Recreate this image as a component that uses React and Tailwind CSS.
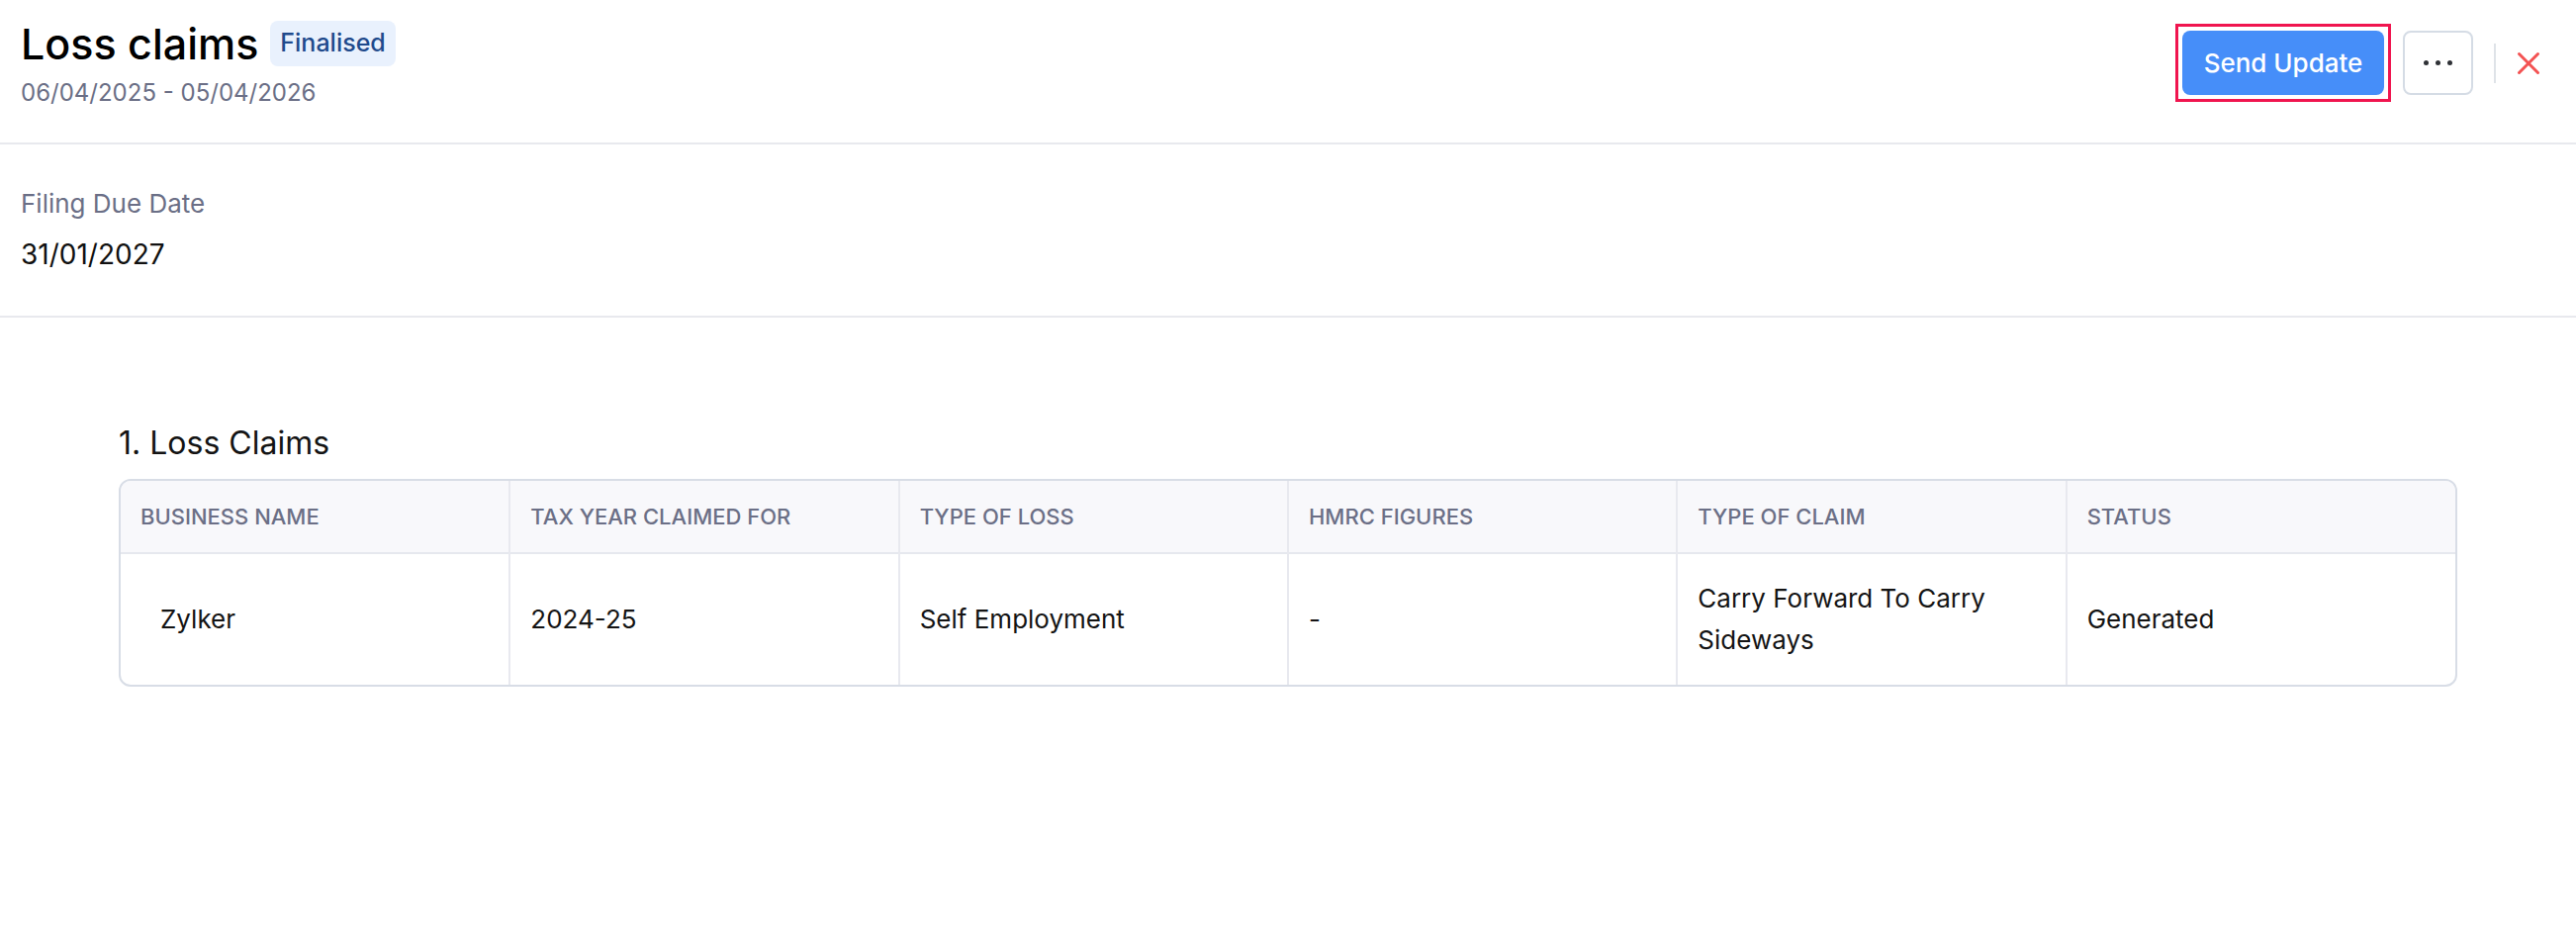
import React from "react";

const columns = [
  "Business Name",
  "Tax Year Claimed For",
  "Type Of Loss",
  "HMRC Figures",
  "Type Of Claim",
  "Status",
];

const claims = [
  {
    business: "Zylker",
    taxYear: "2024-25",
    lossType: "Self Employment",
    hmrc: "-",
    claimType: "Carry Forward To Carry Sideways",
    status: "Generated",
  },
];

function MoreDots() {
  return (
    <span className="flex items-center gap-[7px]">
      <span className="w-[5px] h-[5px] rounded-full bg-[#2f3136]" />
      <span className="w-[5px] h-[5px] rounded-full bg-[#2f3136]" />
      <span className="w-[5px] h-[5px] rounded-full bg-[#2f3136]" />
    </span>
  );
}

function CloseIcon() {
  return (
    <svg width="28" height="28" viewBox="0 0 28 28" fill="none">
      <path d="M4.5 4.5L23.5 23.5M23.5 4.5L4.5 23.5" stroke="#f35252" strokeWidth="3" strokeLinecap="round" />
    </svg>
  );
}

function Header() {
  return (
    <div className="flex items-start justify-between pl-[21px] pr-[34px] pt-[16px] pb-[34px] border-b-2 border-[#e8e9ee]">
      <div>
        <div className="flex items-center gap-[12px]">
          <h1 className="text-[43px] leading-[56px] font-medium text-black">Loss claims</h1>
          <span className="h-[46px] px-[10px] flex items-center rounded-[8px] bg-[#e9f1fd] text-[#1f4a8c] text-[25px] font-medium">
            Finalised
          </span>
        </div>
        <p className="mt-[6px] text-[24px] leading-[32px] text-[#6b6f86]">06/04/2025 - 05/04/2026</p>
      </div>

      <div className="mt-[8px] flex items-center">
        <div className="border-[3px] border-[#f0154f] p-[4px]">
          <button className="w-[204px] h-[65px] rounded-[8px] bg-[#468ef9] text-white text-[26px] font-medium">
            Send Update
          </button>
        </div>
        <button className="ml-[12px] w-[71px] h-[65px] rounded-[8px] border-2 border-[#d5dce5] bg-white flex items-center justify-center">
          <MoreDots />
        </button>
        <span className="ml-[21px] w-[2px] h-[40px] bg-[#dfe3e8]" />
        <button className="ml-[19px] flex items-center justify-center">
          <CloseIcon />
        </button>
      </div>
    </div>
  );
}

function LossClaimsTable() {
  return (
    <div className="border-2 border-[#d8dde6] rounded-[12px] overflow-hidden">
      <table className="w-full table-fixed border-collapse">
        <thead>
          <tr className="bg-[#f8f8fb] border-b-2 border-[#e6e8ee]">
            {columns.map((col, i) => (
              <th
                key={col}
                className={`h-[73px] pl-[20px] pr-[16px] text-left align-middle text-[22px] font-medium uppercase text-[#6b6f86] ${i > 0 ? "border-l-2 border-[#e8e9ef]" : ""}`}
              >
                {col}
              </th>
            ))}
          </tr>
        </thead>
        <tbody>
          {claims.map((row) => (
            <tr key={row.business} className="text-[26px] leading-[42px] text-[#141414]">
              <td className="pl-[40px] pr-[16px] py-[24px] align-middle">{row.business}</td>
              <td className="pl-[20px] pr-[16px] py-[24px] align-middle border-l-2 border-[#e8e9ef]">{row.taxYear}</td>
              <td className="pl-[20px] pr-[16px] py-[24px] align-middle border-l-2 border-[#e8e9ef]">{row.lossType}</td>
              <td className="pl-[20px] pr-[16px] py-[24px] align-middle border-l-2 border-[#e8e9ef]">{row.hmrc}</td>
              <td className="pl-[20px] pr-[16px] py-[24px] align-middle border-l-2 border-[#e8e9ef]">{row.claimType}</td>
              <td className="pl-[20px] pr-[16px] py-[24px] align-middle border-l-2 border-[#e8e9ef]">{row.status}</td>
            </tr>
          ))}
        </tbody>
      </table>
    </div>
  );
}

export default function App() {
  return (
    <div className="min-h-[950px] bg-white" style={{ fontFamily: "Inter, 'Noto Sans', sans-serif" }}>
      <Header />

      <div className="px-[21px] pt-[42px] pb-[42px] border-b-2 border-[#e8e9ee]">
        <p className="text-[26px] leading-[36px] text-[#6b6f86]">Filing Due Date</p>
        <p className="mt-[13px] text-[28px] leading-[40px] text-[#111111]">31/01/2027</p>
      </div>

      <div className="px-[120px] pt-[107px]">
        <h2 className="text-[32px] leading-[40px] text-[#141414]">1. Loss Claims</h2>
        <div className="mt-[16px]">
          <LossClaimsTable />
        </div>
      </div>
    </div>
  );
}
